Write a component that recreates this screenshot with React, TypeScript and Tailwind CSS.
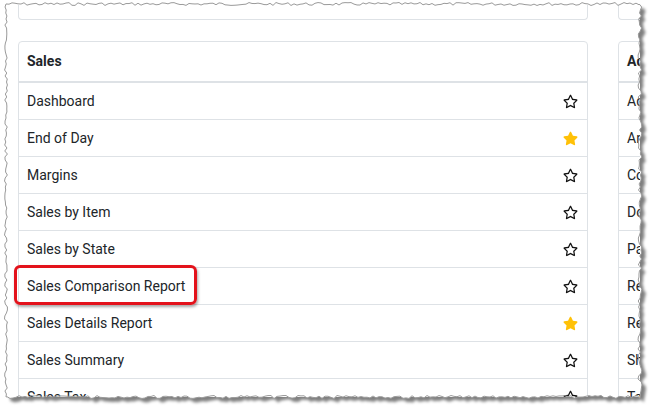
import React from "react";
import { FaRegStar, FaStar } from "react-icons/fa";

type Row = { label: string; fav: boolean };

const sales: Row[] = [
  { label: "Dashboard", fav: false },
  { label: "End of Day", fav: true },
  { label: "Margins", fav: false },
  { label: "Sales by Item", fav: false },
  { label: "Sales by State", fav: false },
  { label: "Sales Comparison Report", fav: false },
  { label: "Sales Details Report", fav: true },
  { label: "Sales Summary", fav: false },
  { label: "Sales Tax", fav: false },
];

const admin: Row[] = [
  { label: "Adjustments", fav: false },
  { label: "Analytics", fav: false },
  { label: "Commissions", fav: false },
  { label: "Donations", fav: false },
  { label: "Payments", fav: false },
  { label: "Refunds", fav: false },
  { label: "Returns", fav: false },
  { label: "Shipping", fav: false },
  { label: "Taxes", fav: false },
];

// torn paper outline, jitter computed once
function tornPath(x0: number, y0: number, x1: number, y1: number) {
  let seed = 7;
  const rnd = () => {
    seed = (seed * 9301 + 49297) % 233280;
    return seed / 233280 - 0.5;
  };
  const pts: string[] = [];
  for (let x = x0; x < x1; x += 3) pts.push(`${x},${y0 + rnd() * 3}`);
  for (let y = y0; y < y1; y += 3) pts.push(`${x1 + rnd() * 4},${y}`);
  for (let x = x1; x > x0; x -= 3) pts.push(`${x},${y1 + rnd() * 3}`);
  for (let y = y1; y > y0; y -= 3) pts.push(`${x0 + rnd() * 3},${y}`);
  return "M" + pts.join(" L") + " Z";
}

const edge = tornPath(6, 4, 640, 397);

function Card({ title, rows, highlight }: { title: string; rows: Row[]; highlight?: string }) {
  return (
    <div className="w-[570px] shrink-0 rounded-[4px] border border-[#dee2e6] bg-white">
      <div className="flex h-[41px] items-center border-b-2 border-[#dee2e6] px-2 text-[14px] font-bold text-[#212529]">
        {title}
      </div>
      {rows.map((r) => (
        <div
          key={r.label}
          className="relative flex h-[37px] items-center justify-between border-b border-[#dee2e6] px-2 text-[14px] text-[#212529]"
        >
          <span>{r.label}</span>
          {r.fav ? (
            <FaStar className="mr-[1px] h-[15px] w-[15px] text-[#ffc107]" />
          ) : (
            <FaRegStar className="mr-[1px] h-[15px] w-[15px] text-[#111]" />
          )}
          {highlight === r.label && (
            <div className="absolute left-[-5px] top-[-3px] h-[40px] w-[183px] rounded-[6px] border-[3px] border-[#e3121b] shadow-[1px_2px_3px_rgba(0,0,0,0.35)]" />
          )}
        </div>
      ))}
    </div>
  );
}

export default function App() {
  return (
    <div
      className="relative h-[414px] w-[655px] overflow-hidden bg-white"
      style={{ fontFamily: "Roboto, 'Liberation Sans', sans-serif" }}
    >
      <svg className="absolute inset-0" width="655" height="414" aria-hidden="true">
        <defs>
          <filter id="sh" x="-5%" y="-5%" width="110%" height="110%">
            <feGaussianBlur stdDeviation="1.6" />
          </filter>
        </defs>
        <path d={edge} transform="translate(4 4)" fill="rgba(0,0,0,0.5)" filter="url(#sh)" />
        <path d={edge} fill="#fff" />
      </svg>

      <div className="relative ml-[7px] mt-[5px] h-[392px] w-[633px] overflow-hidden">
        <div className="flex gap-[30px] pl-[11px]">
          <div className="h-[15px] w-[570px] shrink-0 rounded-b-[4px] border-x border-b border-[#dee2e6]" />
          <div className="h-[15px] w-[570px] shrink-0 rounded-b-[4px] border-x border-b border-[#dee2e6]" />
        </div>
        <div className="mt-[21px] flex gap-[30px] pl-[11px]">
          <Card title="Sales" rows={sales} highlight="Sales Comparison Report" />
          <Card title="Administration" rows={admin} />
        </div>
      </div>

      <svg className="pointer-events-none absolute inset-0" width="655" height="414" aria-hidden="true">
        <path d={edge} fill="none" stroke="#9a9a9a" strokeWidth="1" />
      </svg>
    </div>
  );
}
